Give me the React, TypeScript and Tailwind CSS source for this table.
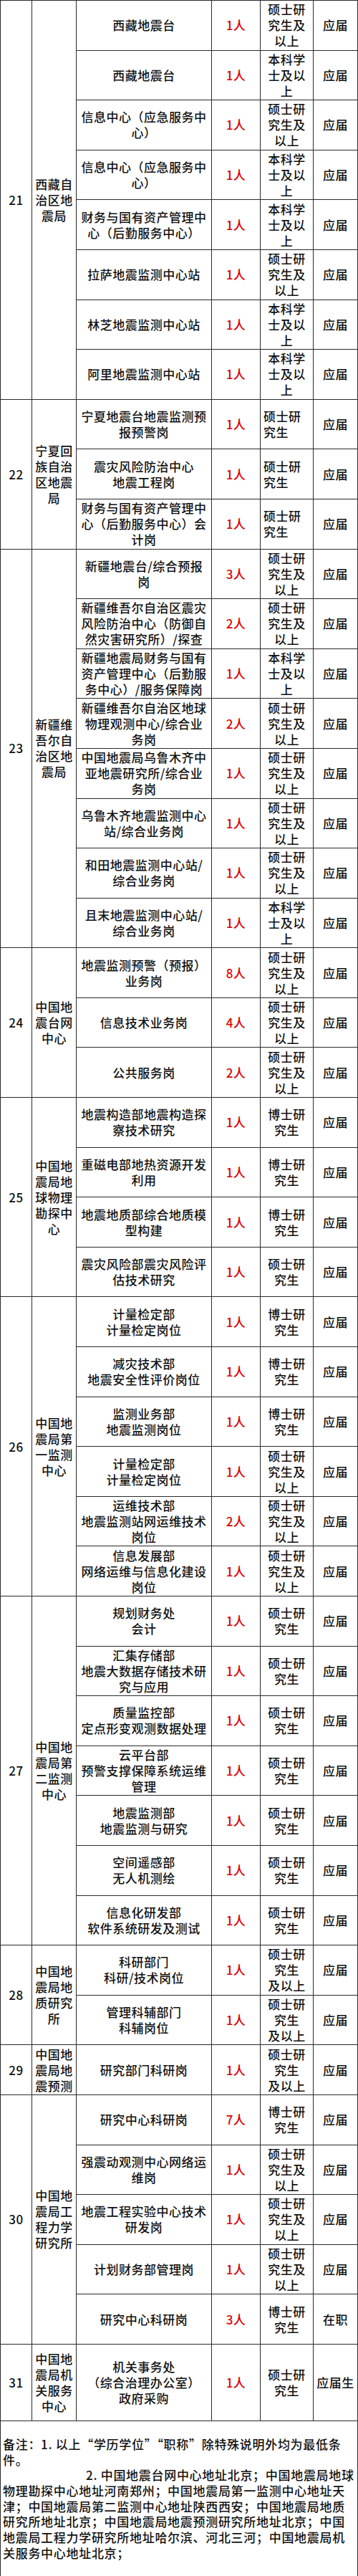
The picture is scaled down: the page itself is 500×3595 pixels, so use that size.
import React from "react";

type Row = {
  post: string[];
  num: string;
  edu: string[];
  type?: string;
  eduLeft?: boolean;
  tall?: boolean;
};

type Group = {
  no: string;
  org: string[];
  rows: Row[];
};

const M = ["硕士研", "究生及", "以上"];
const B = ["本科学", "士及以", "上"];
const D = ["博士研", "究生"];
const MS = ["硕士研", "究生"];
const MP = ["硕士研", "究生", "及以上"];

const groups: Group[] = [
  {
    no: "21",
    org: ["西藏自", "治区地", "震局"],
    rows: [
      { post: ["西藏地震台"], num: "1人", edu: M },
      { post: ["西藏地震台"], num: "1人", edu: B },
      { post: ["信息中心（应急服务中", "心）"], num: "1人", edu: M },
      { post: ["信息中心（应急服务中", "心）"], num: "1人", edu: B },
      { post: ["财务与国有资产管理中", "心（后勤服务中心）"], num: "1人", edu: B },
      { post: ["拉萨地震监测中心站"], num: "1人", edu: M },
      { post: ["林芝地震监测中心站"], num: "1人", edu: B },
      { post: ["阿里地震监测中心站"], num: "1人", edu: B },
    ],
  },
  {
    no: "22",
    org: ["宁夏回", "族自治", "区地震", "局"],
    rows: [
      { post: ["宁夏地震台地震监测预", "报预警岗"], num: "1人", edu: MS, eduLeft: true },
      { post: ["震灾风险防治中心", "地震工程岗"], num: "1人", edu: MS, eduLeft: true },
      {
        post: ["财务与国有资产管理中", "心（后勤服务中心）会", "计岗"],
        num: "1人",
        edu: MS,
        eduLeft: true,
      },
    ],
  },
  {
    no: "23",
    org: ["新疆维", "吾尔自", "治区地", "震局"],
    rows: [
      { post: ["新疆地震台/综合预报", "岗"], num: "3人", edu: M },
      {
        post: ["新疆维吾尔自治区震灾", "风险防治中心（防御自", "然灾害研究所）/探查"],
        num: "2人",
        edu: M,
      },
      {
        post: ["新疆地震局财务与国有", "资产管理中心（后勤服", "务中心）/服务保障岗"],
        num: "1人",
        edu: B,
      },
      { post: ["新疆维吾尔自治区地球", "物理观测中心/综合业", "务岗"], num: "2人", edu: M },
      { post: ["中国地震局乌鲁木齐中", "亚地震研究所/综合业", "务岗"], num: "1人", edu: M },
      { post: ["乌鲁木齐地震监测中心", "站/综合业务岗"], num: "1人", edu: M },
      { post: ["和田地震监测中心站/", "综合业务岗"], num: "1人", edu: M },
      { post: ["且末地震监测中心站/", "综合业务岗"], num: "1人", edu: B },
    ],
  },
  {
    no: "24",
    org: ["中国地", "震台网", "中心"],
    rows: [
      { post: ["地震监测预警（预报）", "业务岗"], num: "8人", edu: M },
      { post: ["信息技术业务岗"], num: "4人", edu: M },
      { post: ["公共服务岗"], num: "2人", edu: M },
    ],
  },
  {
    no: "25",
    org: ["中国地", "震局地", "球物理", "勘探中", "心"],
    rows: [
      { post: ["地震构造部地震构造探", "察技术研究"], num: "1人", edu: D },
      { post: ["重磁电部地热资源开发", "利用"], num: "1人", edu: D },
      { post: ["地震地质部综合地质模", "型构建"], num: "1人", edu: D },
      { post: ["震灾风险部震灾风险评", "估技术研究"], num: "1人", edu: MS },
    ],
  },
  {
    no: "26",
    org: ["中国地", "震局第", "一监测", "中心"],
    rows: [
      { post: ["计量检定部", "计量检定岗位"], num: "1人", edu: D },
      { post: ["减灾技术部", "地震安全性评价岗位"], num: "1人", edu: D },
      { post: ["监测业务部", "地震监测岗位"], num: "1人", edu: D },
      { post: ["计量检定部", "计量检定岗位"], num: "1人", edu: M },
      { post: ["运维技术部", "地震监测站网运维技术", "岗位"], num: "2人", edu: M },
      { post: ["信息发展部", "网络运维与信息化建设", "岗位"], num: "1人", edu: M },
    ],
  },
  {
    no: "27",
    org: ["中国地", "震局第", "二监测", "中心"],
    rows: [
      { post: ["规划财务处", "会计"], num: "1人", edu: MS },
      { post: ["汇集存储部", "地震大数据存储技术研", "究与应用"], num: "1人", edu: MS },
      { post: ["质量监控部", "定点形变观测数据处理"], num: "1人", edu: MS },
      { post: ["云平台部", "预警支撑保障系统运维", "管理"], num: "1人", edu: MS },
      { post: ["地震监测部", "地震监测与研究"], num: "1人", edu: MS },
      { post: ["空间遥感部", "无人机测绘"], num: "1人", edu: MS },
      { post: ["信息化研发部", "软件系统研发及测试"], num: "1人", edu: MS },
    ],
  },
  {
    no: "28",
    org: ["中国地", "震局地", "质研究", "所"],
    rows: [
      { post: ["科研部门", "科研/技术岗位"], num: "1人", edu: MP },
      { post: ["管理科辅部门", "科辅岗位"], num: "1人", edu: MP },
    ],
  },
  {
    no: "29",
    org: ["中国地", "震局地", "震预测"],
    rows: [{ post: ["研究部门科研岗"], num: "1人", edu: MP }],
  },
  {
    no: "30",
    org: ["中国地", "震局工", "程力学", "研究所"],
    rows: [
      { post: ["研究中心科研岗"], num: "7人", edu: D },
      { post: ["强震动观测中心网络运", "维岗"], num: "1人", edu: M },
      { post: ["地震工程实验中心技术", "研发岗"], num: "1人", edu: M },
      { post: ["计划财务部管理岗"], num: "1人", edu: M },
      { post: ["研究中心科研岗"], num: "3人", edu: D, type: "在职" },
    ],
  },
  {
    no: "31",
    org: ["中国地", "震局机", "关服务", "中心"],
    rows: [
      {
        post: ["机关事务处", "（综合治理办公室）", "政府采购"],
        num: "1人",
        edu: MS,
        type: "应届生",
        tall: true,
      },
    ],
  },
];

const notes = [
  { text: "备注：1. 以上“学历学位”“职称”除特殊说明外均为最低条", indent: false },
  { text: "件。", indent: false },
  { text: "2. 中国地震台网中心地址北京；中国地震局地球", indent: true },
  { text: "物理勘探中心地址河南郑州；中国地震局第一监测中心地址天", indent: false },
  { text: "津；中国地震局第二监测中心地址陕西西安；中国地震局地质", indent: false },
  { text: "研究所地址北京；中国地震局地震预测研究所地址北京；中国", indent: false },
  { text: "地震局工程力学研究所地址哈尔滨、河北三河；中国地震局机", indent: false },
  { text: "关服务中心地址北京；", indent: false },
];

function Lines({ lines, left }: { lines: string[]; left?: boolean }) {
  return (
    <div className={left ? "w-full pl-[4px] text-left" : "text-center"}>
      {lines.map((line, i) => (
        <div key={i} className="whitespace-nowrap">
          {line}
        </div>
      ))}
    </div>
  );
}

function PostRow({ row }: { row: Row }) {
  return (
    <div
      className={`flex border-b border-[#2a2a2a] ${row.tall ? "h-[107px]" : "h-[69.6px]"}`}
    >
      <div className="flex w-[189px] shrink-0 items-center justify-center border-r border-[#2a2a2a]">
        <Lines lines={row.post} />
      </div>
      <div className="flex w-[68px] shrink-0 items-center justify-center border-r border-[#2a2a2a] text-[#e00000]">
        {row.num}
      </div>
      <div className="flex w-[74px] shrink-0 items-center justify-center border-r border-[#2a2a2a]">
        <Lines lines={row.edu} left={row.eduLeft} />
      </div>
      <div className="flex w-[62px] shrink-0 items-center justify-center border-r border-[#2a2a2a] whitespace-nowrap">
        {row.type ?? "应届"}
      </div>
    </div>
  );
}

export default function App() {
  return (
    <div className="w-[500px] bg-white font-['Noto_Sans_CJK_SC','Noto_Sans',sans-serif] text-[17px] font-medium leading-[22px] tracking-[0.5px] text-[#111]">
      <div className="border-t border-l border-[#2a2a2a]">
        {groups.map((group) => (
          <div key={group.no} className="flex">
            <div className="flex w-[44px] shrink-0 items-center justify-center border-r border-b border-[#2a2a2a]">
              {group.no}
            </div>
            <div className="flex w-[62px] shrink-0 items-center justify-center border-r border-b border-[#2a2a2a]">
              <Lines lines={group.org} />
            </div>
            <div className="flex flex-col">
              {group.rows.map((row, i) => (
                <PostRow key={i} row={row} />
              ))}
            </div>
          </div>
        ))}
      </div>
      <div className="border-x border-b border-[#2a2a2a] pt-[21px] pb-[21px] pl-[3px] text-[17px] leading-[21.7px] tracking-[0.7px]">
        {notes.map((note, i) => (
          <div key={i} className={`whitespace-nowrap ${note.indent ? "pl-[116px]" : ""}`}>
            {note.text}
          </div>
        ))}
      </div>
    </div>
  );
}
